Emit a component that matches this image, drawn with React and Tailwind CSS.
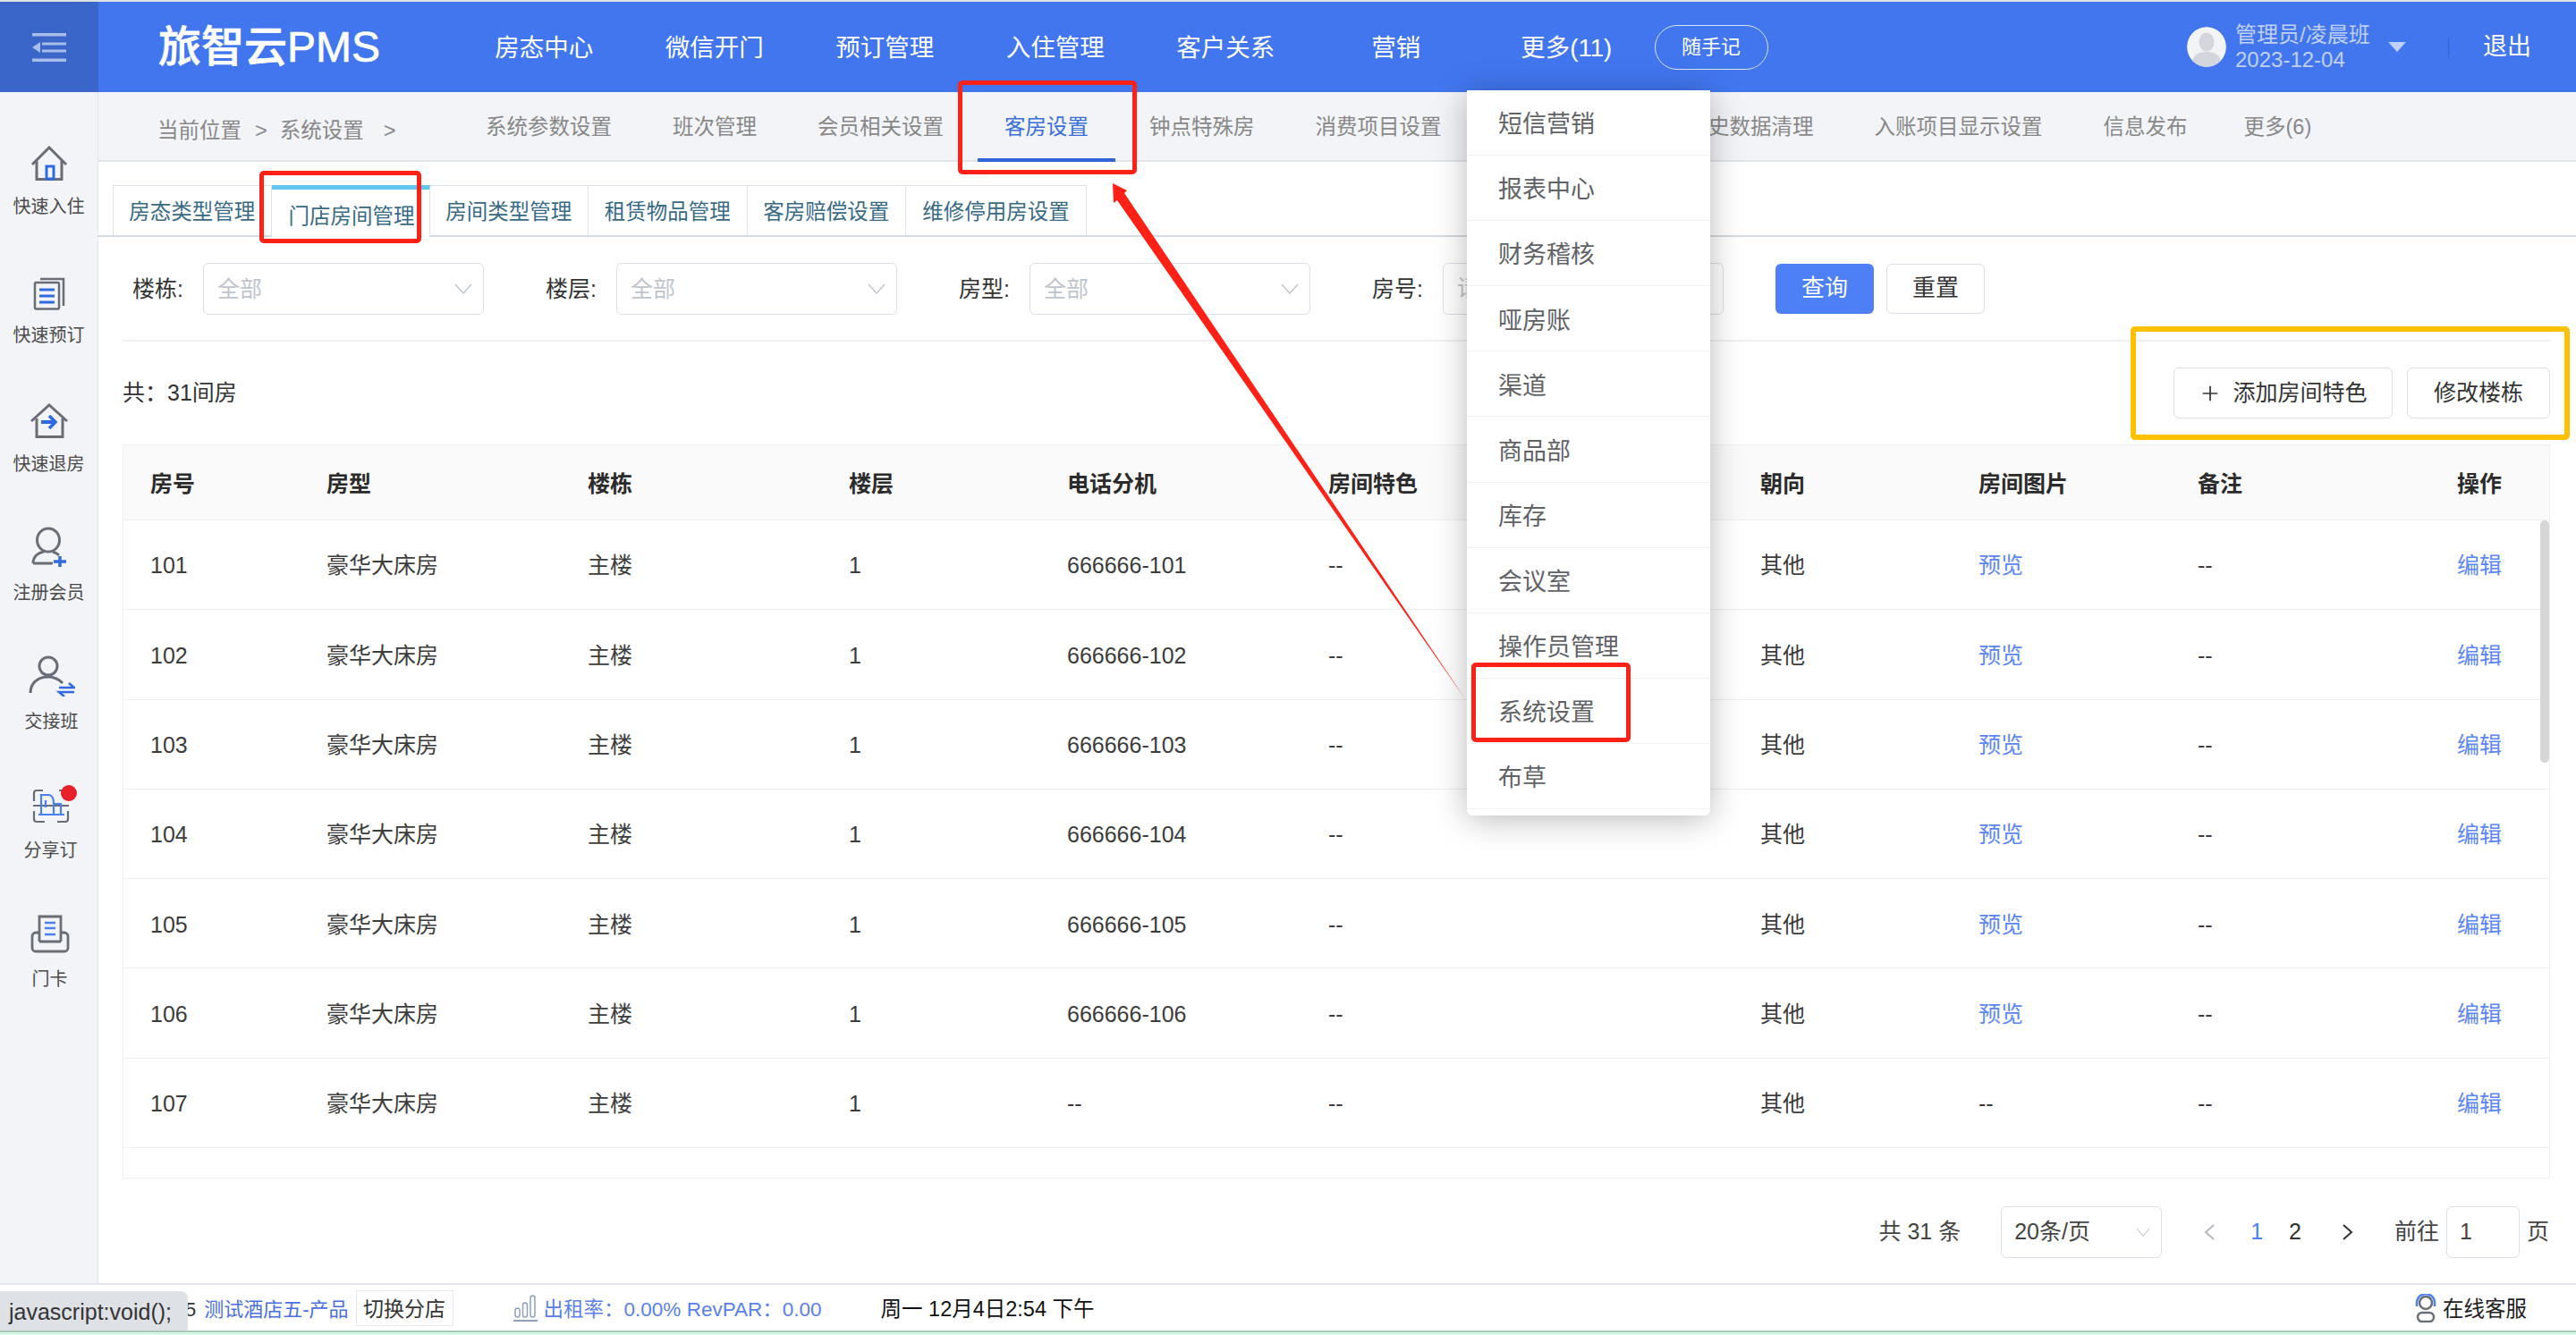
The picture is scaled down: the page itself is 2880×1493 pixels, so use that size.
import React from "react";
import { Plus } from "lucide-react";

const navItems = ["房态中心", "微信开门", "预订管理", "入住管理", "客户关系", "营销", "更多(11)"];
const subTabs = ["房态类型管理", "门店房间管理", "房间类型管理", "租赁物品管理", "客房赔偿设置", "维修停用房设置"];
const menuItems = ["短信营销", "报表中心", "财务稽核", "哑房账", "渠道", "商品部", "库存", "会议室", "操作员管理", "系统设置", "布草"];

const rooms = [
  { no: "101", phone: "666666-101", photo: true },
  { no: "102", phone: "666666-102", photo: true },
  { no: "103", phone: "666666-103", photo: true },
  { no: "104", phone: "666666-104", photo: true },
  { no: "105", phone: "666666-105", photo: true },
  { no: "106", phone: "666666-106", photo: true },
  { no: "107", phone: "--", photo: false },
];

const headCols = "grid grid-cols-[197px_292px_292px_244px_292px_483px_244px_245px_290px_135px]";
const bodyCols = "grid grid-cols-[197px_292px_292px_244px_292px_483px_244px_245px_290px_124px]";

const Chev = ({ className = "" }) => (
  <svg width="20" height="12" viewBox="0 0 20 12" className={className} fill="none" stroke="currentColor" strokeWidth="1.4">
    <polyline points="1,1 10,11 19,1" />
  </svg>
);

const HouseIn = () => (
  <svg width="42" height="40" viewBox="0 0 42 40" fill="none">
    <polyline points="2,21 21,2 40,21" stroke="#686d76" strokeWidth="3" />
    <polyline points="7,17 7,37.5 35,37.5 35,17" stroke="#686d76" strokeWidth="3" />
    <rect x="18" y="23" width="8" height="14" stroke="#2f6ae0" strokeWidth="3" />
  </svg>
);

const DocIcon = () => (
  <svg width="36" height="37" viewBox="0 0 36 37" fill="none">
    <polyline points="8,2 34,2 34,32" stroke="#686d76" strokeWidth="2.5" />
    <rect x="2" y="6" width="27" height="29.5" rx="1.5" stroke="#686d76" strokeWidth="2.5" />
    <path d="M7 14h17M7 21h17M7 28h17" stroke="#2f6ae0" strokeWidth="3" />
  </svg>
);

const HouseOut = () => (
  <svg width="44" height="40" viewBox="0 0 44 40" fill="none">
    <polyline points="2,20 22,2 42,20" stroke="#686d76" strokeWidth="3" />
    <polyline points="8,17 8,37.5 37,37.5 37,17" stroke="#686d76" strokeWidth="3" />
    <path d="M13 21h15" stroke="#2f6ae0" strokeWidth="4" />
    <polyline points="22,14 29,21 22,28" stroke="#2f6ae0" strokeWidth="3.5" />
  </svg>
);

const PersonPlus = () => (
  <svg width="40" height="46" viewBox="0 0 40 46" fill="none">
    <ellipse cx="19" cy="15" rx="12.5" ry="13" stroke="#686d76" strokeWidth="3" />
    <path d="M2 41c0-8 6-12 12-13M2 41h22M24 28c3 1 5 2 7 4" stroke="#686d76" strokeWidth="3" />
    <path d="M32 33v12M25 39h14" stroke="#2f6ae0" strokeWidth="3.5" />
  </svg>
);

const PersonSwap = () => (
  <svg width="52" height="46" viewBox="0 0 52 46" fill="none">
    <circle cx="22" cy="12" r="10" stroke="#686d76" strokeWidth="3" />
    <path d="M2 42c0-11 8-18 20-18 7 0 12 3 16 7" stroke="#686d76" strokeWidth="3" />
    <path d="M34 36h17l-6-5M51 41H34l6 5" stroke="#2f6ae0" strokeWidth="2.5" />
  </svg>
);

const ShareIcon = () => (
  <svg width="42" height="42" viewBox="0 0 42 42" fill="none">
    <path d="M12 3H5a3 3 0 0 0-3 3v9M30 3h8v6M2 26v9a3 3 0 0 0 3 3h9M40 26v9a3 3 0 0 1-3 3h-9M1 20h40" stroke="#686d76" strokeWidth="2.2" />
    <path d="M10 30V8h8c4 0 6 4 6 9v13M24 18h8v12M7 30h29M15 14v8" stroke="#4a80f0" strokeWidth="2.2" />
  </svg>
);

const CardIcon = () => (
  <svg width="44" height="44" viewBox="0 0 44 44" fill="none">
    <path d="M10 30V2h24v28" stroke="#686d76" strokeWidth="2.8" />
    <path d="M9 20H6a4 4 0 0 0-4 4v13a4 4 0 0 0 4 4h32a4 4 0 0 0 4-4V24a4 4 0 0 0-4-4h-3M10 30h24" stroke="#686d76" strokeWidth="2.8" />
    <path d="M16 9h12M16 15h12M16 22h12" stroke="#4a80f0" strokeWidth="2.6" />
  </svg>
);

const sideItems = [
  { label: "快速入住", icon: <HouseIn /> },
  { label: "快速预订", icon: <DocIcon /> },
  { label: "快速退房", icon: <HouseOut /> },
  { label: "注册会员", icon: <PersonPlus /> },
  { label: "交接班", icon: <PersonSwap />, shift: "pl-[6px]" },
  { label: "分享订", icon: <ShareIcon />, dot: true, shift: "pl-[4px]" },
  { label: "门卡", icon: <CardIcon />, shift: "pl-[2px]" },
];

const SideItem = ({ item }) => (
  <div className={`h-[144px] pt-[56px] flex flex-col items-center ${item.shift || ""}`}>
    <div className="relative h-[44px] flex items-end justify-center">
      {item.icon}
      {item.dot && <span className="absolute -right-[8px] -top-[1px] w-[18px] h-[18px] rounded-full bg-[#e8202a]" />}
    </div>
    <div className="mt-[14px] h-[28px] leading-[28px] text-[20px] text-[#4a4a4a] whitespace-nowrap">{item.label}</div>
  </div>
);

const Select = ({ label }) => (
  <div className="flex items-center">
    <span className="w-[79px] pt-[2px] text-[25px] text-[#333]">{label}</span>
    <div className="w-[314px] h-[58px] rounded-[6px] border border-[#dcdfe6] flex items-center justify-between pl-[15px] pr-[12px] text-[25px] text-[#c0c4cc]">
      <span className="pt-[2px]">全部</span>
      <Chev />
    </div>
  </div>
);

const App = () => {
  return (
    <div className="relative w-[2880px] h-[1493px] overflow-hidden bg-white flex flex-col [font-family:'Liberation_Sans','Noto_Sans_CJK_SC',sans-serif]">
      <div className="h-[2px] bg-[#dfe1e5]" />

      {/* top bar */}
      <header className="h-[101px] bg-[#4276ef] flex items-center text-white">
        <div className="w-[110px] h-full bg-[#3a65c9] flex items-center justify-center">
          <svg width="38" height="32" viewBox="0 0 38 32" fill="#a9bdeb">
            <rect width="38" height="3.5" />
            <rect x="11" y="10.5" width="27" height="3" />
            <rect x="11" y="18.5" width="27" height="3" />
            <rect y="28.5" width="38" height="3.5" />
            <polygon points="0,16 9,10 9,22" />
          </svg>
        </div>
        <div className="w-[403px] pl-[67px] text-[48px] font-medium whitespace-nowrap [-webkit-text-stroke:0.7px_white]">旅智云PMS</div>
        <nav className="flex pt-[2px]">
          {navItems.map((n) => (
            <a key={n} className="w-[190.5px] text-center text-[27.5px] whitespace-nowrap">{n}</a>
          ))}
        </nav>
        <button className="ml-[3px] w-[127px] h-[50px] rounded-full border border-[#dbe5fb] text-[22px]">随手记</button>
        <div className="ml-auto flex items-center pr-[50px]">
          <svg width="44" height="45" viewBox="0 0 44 45" className="rounded-full">
            <ellipse cx="22" cy="22.5" rx="22" ry="22.5" fill="#f3f4f6" />
            <ellipse cx="22" cy="17" rx="8.5" ry="10.5" fill="#d3d6dc" />
            <path d="M6 38c2-8 9-10 16-10s14 2 16 10c-4 5-10 7-16 7S10 43 6 38z" fill="#d3d6dc" />
          </svg>
          <div className="ml-[10px] w-[150px] text-[#c0d0f6] text-[24px] leading-[28px] whitespace-nowrap">
            <div>管理员/凌晨班</div>
            <div>2023-12-04</div>
          </div>
          <svg width="20" height="11" viewBox="0 0 20 11" className="ml-[21px]" fill="#c0d0f6">
            <polygon points="0,0 20,0 10,11" />
          </svg>
          <span className="ml-[47px] w-[1px] h-[20px] bg-[#3560c8]" />
          <span className="ml-[38px] text-[27px]">退出</span>
        </div>
      </header>

      <div className="flex-1 flex min-h-0">
        {/* quick actions */}
        <aside className="w-[110px] bg-[#f2f4f8] border-r border-[#e4e6ee] shrink-0">
          {sideItems.map((s) => (
            <SideItem key={s.label} item={s} />
          ))}
        </aside>

        <main className="flex-1 min-w-0 flex flex-col">
          {/* settings tabs */}
          <div className="h-[78px] bg-[#f2f4f8] border-b-2 border-[#e3e4e7] flex text-[23.5px] text-[#888]">
            <div className="w-[403px] pl-[66px] pt-[26px] flex whitespace-nowrap">
              <span>当前位置</span>
              <span className="ml-[15px]">&gt;</span>
              <span className="ml-[14px]">系统设置</span>
              <span className="ml-[22px]">&gt;</span>
            </div>
            <div className="flex gap-[8px] whitespace-nowrap">
              <a className="px-[30px] pt-[22px]">系统参数设置</a>
              <a className="px-[30px] pt-[22px]">班次管理</a>
              <a className="px-[30px] pt-[22px]">会员相关设置</a>
              <a className="px-[30px] pt-[22px] h-[78px] border-b-[4px] border-[#2f65d8] text-[#3a6fd8]">客房设置</a>
              <a className="px-[30px] pt-[22px]">钟点特殊房</a>
              <a className="px-[30px] pt-[22px]">消费项目设置</a>
              <span className="w-[199px]" />
              <a className="px-[30px] pt-[22px]">历史数据清理</a>
              <a className="px-[30px] pt-[22px]">入账项目显示设置</a>
              <a className="px-[30px] pt-[22px]">信息发布</a>
              <a className="px-[30px] pt-[22px] -ml-[5px]">更多(6)</a>
            </div>
          </div>

          {/* room sub tabs */}
          <div className="h-[84px] pt-[26px] pl-[16px] border-b-2 border-[#d3dbe0] flex text-[23.5px] text-[#386a84]">
            {subTabs.map((t, i) =>
              i === 1 ? (
                <div key={t} className="w-[177px] h-[58px] border-t-[5px] border-t-[#62c5f1] border-r border-[#dde3e8] bg-white pl-[19px] pt-[13px] whitespace-nowrap">
                  {t}
                </div>
              ) : (
                <div key={t} className={`${i === 5 ? "w-[202px]" : "w-[177.5px]"} h-[56px] pt-[5px] border-t border-r border-[#dde3e8] ${i === 0 ? "border-l" : ""} flex items-center justify-center whitespace-nowrap`}>
                  {t}
                </div>
              )
            )}
          </div>

          {/* filters */}
          <div className="h-[115px] pl-[38px] flex items-center">
            <div className="flex gap-[69px]">
              <Select label="楼栋:" />
              <Select label="楼层:" />
              <Select label="房型:" />
              <div className="flex items-center">
                <span className="w-[79px] pt-[2px] text-[25px] text-[#333]">房号:</span>
                <div className="w-[314px] h-[58px] rounded-[6px] border border-[#dcdfe6] flex items-center pl-[15px] text-[25px] text-[#c0c4cc]">请输入房号</div>
              </div>
            </div>
            <button className="ml-[58px] w-[110px] h-[56px] rounded-[6px] bg-[#4d7ff7] text-white text-[26px]">查询</button>
            <button className="ml-[14px] w-[110px] h-[56px] rounded-[6px] border border-[#dcdfe6] text-[#333] text-[26px]">重置</button>
          </div>
          <div className="h-[2px] ml-[27px] mr-[29px] bg-[#f0f0f0]" />

          {/* count + actions */}
          <div className="h-[115px] pl-[27px] pr-[29px] flex items-center justify-between">
            <span className="text-[25px] text-[#333]">共：31间房</span>
            <div className="flex gap-[16px] text-[25px] text-[#333]">
              <button className="w-[245px] h-[57px] rounded-[6px] border border-[#dcdfe6] flex items-center justify-center gap-[12px]">
                <Plus size={26} strokeWidth={1.6} />
                添加房间特色
              </button>
              <button className="w-[160px] h-[57px] rounded-[6px] border border-[#dcdfe6]">修改楼栋</button>
            </div>
          </div>

          {/* room table */}
          <div className="ml-[27px] mr-[29px] h-[821px] border border-[#f0f0f0] overflow-hidden text-[25px] text-[#3c3c3c]">
            <div className={`${headCols} h-[84px] pt-[4px] bg-[#fafafa] border-b border-[#efefef] items-center font-bold text-[#2b2b2b]`}>
              {["房号", "房型", "楼栋", "楼层", "电话分机", "房间特色", "朝向", "房间图片", "备注", "操作"].map((h) => (
                <div key={h} className="pl-[30px] whitespace-nowrap">{h}</div>
              ))}
            </div>
            <div className="relative">
              {rooms.map((r) => (
                <div key={r.no} className={`${bodyCols} h-[100.3px] pt-[3px] border-b border-[#efefef] items-center`}>
                  <div className="pl-[30px]">{r.no}</div>
                  <div className="pl-[30px]">豪华大床房</div>
                  <div className="pl-[30px]">主楼</div>
                  <div className="pl-[30px]">1</div>
                  <div className="pl-[30px]">{r.phone}</div>
                  <div className="pl-[30px]">--</div>
                  <div className="pl-[30px]">其他</div>
                  <div className={`pl-[30px] ${r.photo ? "text-[#5b86f5]" : ""}`}>{r.photo ? "预览" : "--"}</div>
                  <div className="pl-[30px]">--</div>
                  <div className="pl-[30px] text-[#5b86f5]">编辑</div>
                </div>
              ))}
              <div className="absolute right-0 top-0 w-[10px] h-[271px] rounded-full bg-[#d6d6d6]" />
            </div>
          </div>

          {/* pagination */}
          <div className="h-[117px] pt-[3px] pr-[30px] flex items-center justify-end text-[25px] text-[#444]">
            <span>共 31 条</span>
            <div className="ml-[45px] w-[180px] h-[58px] rounded-[6px] border border-[#dcdfe6] flex items-center justify-between pl-[14px] pr-[12px]">
              <span>20条/页</span>
              <Chev className="w-[16px] text-[#c0c4cc]" />
            </div>
            <svg width="12" height="18" viewBox="0 0 12 18" className="ml-[47px]" fill="none" stroke="#b4b8bf" strokeWidth="2">
              <polyline points="11,1 2,9 11,17" />
            </svg>
            <span className="ml-[40px] text-[#4d7ff7]">1</span>
            <span className="ml-[29px] text-[#333]">2</span>
            <svg width="12" height="18" viewBox="0 0 12 18" className="ml-[46px]" fill="none" stroke="#333" strokeWidth="2">
              <polyline points="1,1 10,9 1,17" />
            </svg>
            <span className="ml-[46px]">前往</span>
            <div className="ml-[8px] w-[82px] h-[58px] rounded-[6px] border border-[#dcdfe6] flex items-center pl-[14px]">1</div>
            <span className="ml-[8px]">页</span>
          </div>
        </main>
      </div>

      {/* status bar */}
      <footer className="h-[53px] border-t-2 border-[#e6e6ee] bg-white flex items-center pl-[207px] pr-[55px] text-[22px] whitespace-nowrap">
        <span className="pt-[4px] text-[#333]">5</span>
        <span className="ml-[9px] pt-[4px] text-[#4a6fe0]">测试酒店五-产品</span>
        <span className="ml-[8px] w-[109px] h-[40px] pt-[3px] border border-[#e8e8ee] flex items-center justify-center text-[#333] text-[23px]">切换分店</span>
        <svg width="27" height="32" viewBox="0 0 27 32" className="ml-[67px]" fill="none">
          <rect x="2" y="16" width="5" height="10" rx="2.5" stroke="#8ea0bc" strokeWidth="1.5" />
          <rect x="10.5" y="10" width="5" height="16" rx="2.5" stroke="#8ea0bc" strokeWidth="1.5" />
          <rect x="19" y="2" width="5" height="24" rx="2.5" stroke="#8ea0bc" strokeWidth="1.5" />
          <path d="M0 30h27" stroke="#8ea0bc" strokeWidth="2" />
        </svg>
        <span className="ml-[7px] pt-[4px] text-[#5a7fe8] text-[22.5px]">出租率：0.00% RevPAR：0.00</span>
        <span className="ml-[66px] pt-[4px] text-[#111] text-[23.5px]">周一 12月4日2:54 下午</span>
        <span className="ml-auto flex items-center text-[#222] text-[23.5px]">
          <svg width="26" height="32" viewBox="0 0 26 32" className="mr-[6px]" fill="none">
            <circle cx="13" cy="10" r="7" stroke="#686d76" strokeWidth="2.5" />
            <path d="M3 14V10a10 10 0 0 1 20 0v4" stroke="#4a80f0" strokeWidth="2.5" />
            <rect x="4" y="21" width="18" height="10" rx="5" stroke="#686d76" strokeWidth="2.5" />
          </svg>
          <span className="pt-[4px]">在线客服</span>
        </span>
      </footer>
      <div className="h-[2px] bg-[#a8c8b8]" />
      <div className="h-[3px] bg-[#d5f5e8]" />

      {/* annotations drawn on top of the screenshot */}
      <svg className="absolute left-0 top-0 pointer-events-none" width="2880" height="1493">
        <polygon points="1244,205 1260,213 1257,216 1639,783 1249,224 1245,227" fill="#ff2016" />
      </svg>
      <div className="absolute left-[1071px] top-[90px] w-[200px] h-[105px] border-[5px] border-[#ff2016] rounded-[5px]" />
      <div className="absolute left-[290px] top-[191px] w-[181px] h-[81px] border-[5px] border-[#ff2016] rounded-[5px]" />
      <div className="absolute left-[2382px] top-[365px] w-[491px] h-[127px] border-[6px] border-[#ffc000] rounded-[5px]" />

      {/* more menu */}
      <div className="absolute left-[1640px] top-[101px] w-[272px] h-[811px] bg-white rounded-b-[6px] shadow-[0_4px_36px_rgba(0,0,0,0.28)] text-[27px] text-[#606266]">
        {menuItems.map((m) => (
          <div key={m} className="h-[73.1px] pl-[35px] pt-[5px] flex items-center border-b border-[#f2f2f2]">{m}</div>
        ))}
      </div>
      <div className="absolute left-[1645px] top-[741px] w-[178px] h-[89px] border-[5px] border-[#ff2016] rounded-[5px]" />

      <div className="absolute left-0 top-[1444px] w-[210px] h-[44px] bg-[#dee1e6] rounded-tr-[8px] pl-[10px] pt-[3px] flex items-center text-[25px] text-[#333] whitespace-nowrap">javascript:void();</div>
    </div>
  );
};

export default App;
